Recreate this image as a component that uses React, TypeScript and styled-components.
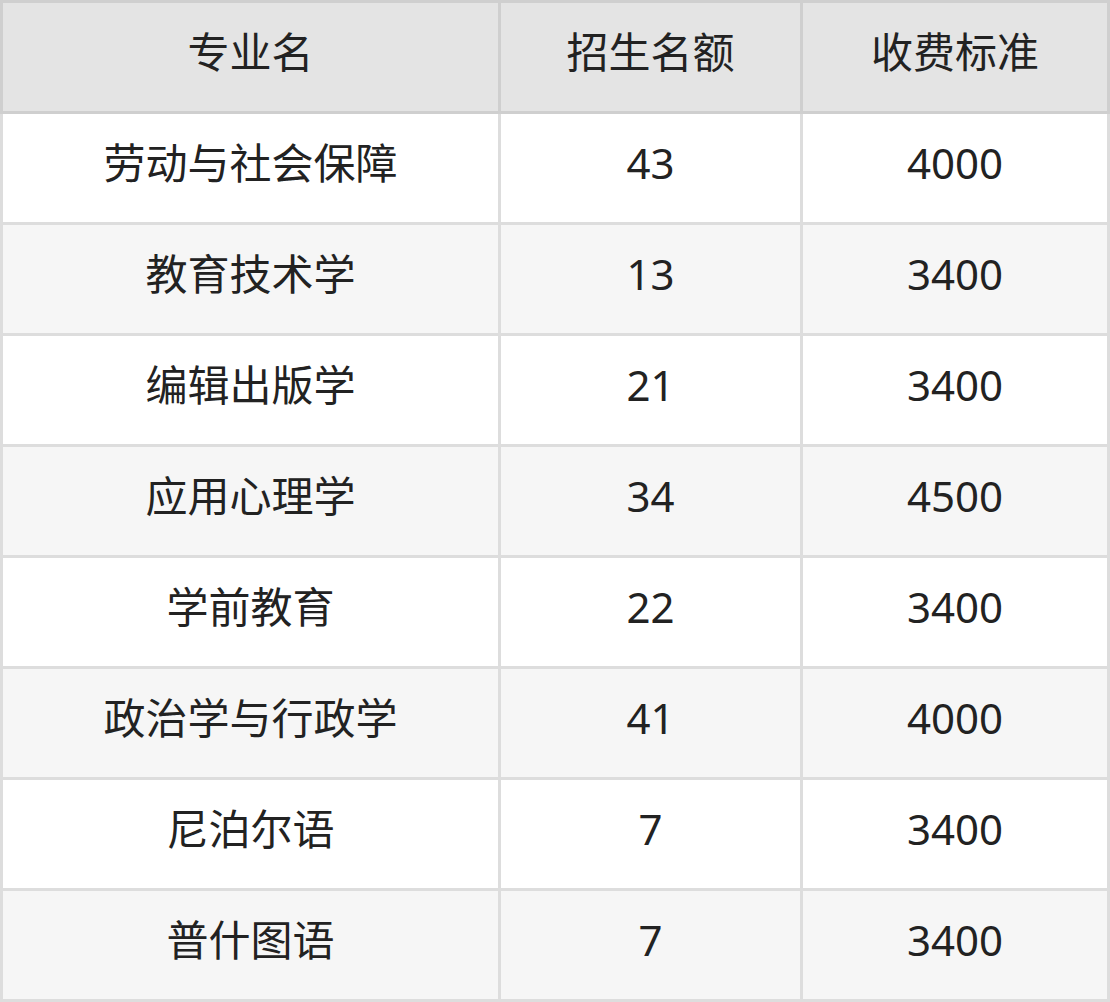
import styled, { createGlobalStyle } from 'styled-components';

const rows: [string, string, string][] = [
  ['劳动与社会保障', '43', '4000'],
  ['教育技术学', '13', '3400'],
  ['编辑出版学', '21', '3400'],
  ['应用心理学', '34', '4500'],
  ['学前教育', '22', '3400'],
  ['政治学与行政学', '41', '4000'],
  ['尼泊尔语', '7', '3400'],
  ['普什图语', '7', '3400'],
];

const GlobalStyle = createGlobalStyle`
  body {
    margin: 0;
    background: #fff;
    font-family: "Noto Sans", "Noto Sans CJK SC", sans-serif;
  }
`;

function App() {
  return (
    <>
      <GlobalStyle />
      <Table>
        <colgroup>
          <col style={{ width: 498 }} />
          <col style={{ width: 302 }} />
          <col style={{ width: 307 }} />
        </colgroup>
        <thead>
          <tr>
            <HeadCell>专业名</HeadCell>
            <HeadCell>招生名额</HeadCell>
            <HeadCell>收费标准</HeadCell>
          </tr>
        </thead>
        <tbody>
          {rows.map(([name, quota, fee], i) => (
            <Row key={name} $shaded={i % 2 === 1}>
              <Cell>{name}</Cell>
              <Cell>{quota}</Cell>
              <Cell>{fee}</Cell>
            </Row>
          ))}
        </tbody>
      </Table>
    </>
  );
}

const Table = styled.table`
  width: 1110px;
  table-layout: fixed;
  border-collapse: collapse;
  color: #222;
  font-size: 42px;
  line-height: 1.2;

  tr {
    height: 111px;
  }
`;

const HeadCell = styled.th`
  background: #e4e4e4;
  border: 3px solid #cfcfcf;
  font-weight: 400;
  text-align: center;
  vertical-align: middle;
  padding: 0 0 9px;
`;

const Row = styled.tr<{ $shaded: boolean }>`
  background: ${(p) => (p.$shaded ? '#f6f6f6' : '#fff')};
`;

const Cell = styled.td`
  border: 3px solid #dddddd;
  text-align: center;
  vertical-align: middle;
  padding: 0 0 9px;
`;

export default App;
